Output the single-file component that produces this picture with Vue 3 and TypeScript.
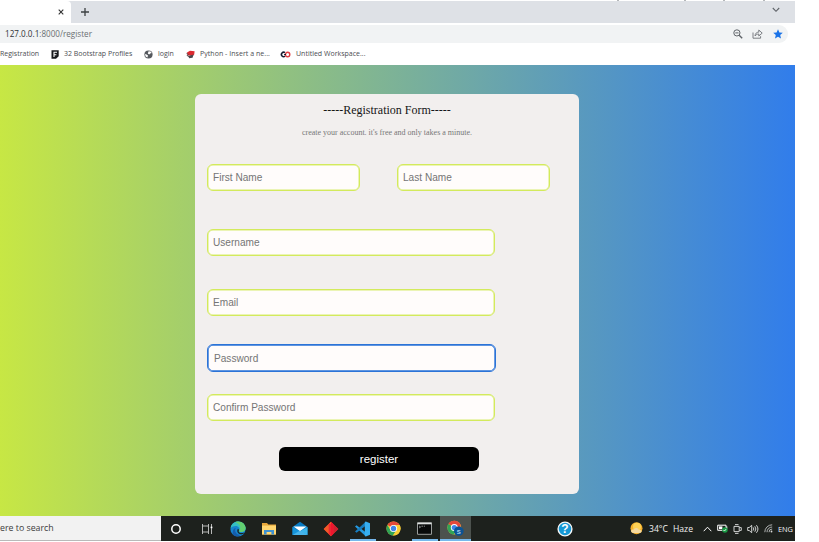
<script setup lang="ts">
import { ref } from 'vue'

interface Field {
  name: string
  label: string
  type: string
}

const nameFields: Field[] = [
  { name: 'first', label: 'First Name', type: 'text' },
  { name: 'last', label: 'Last Name', type: 'text' },
]
const accountFields: Field[] = [
  { name: 'username', label: 'Username', type: 'text' },
  { name: 'email', label: 'Email', type: 'text' },
  { name: 'password', label: 'Password', type: 'password' },
  { name: 'confirm', label: 'Confirm Password', type: 'password' },
]
const active = ref('password')
</script>

<template>
  <div class="screen">
    <header class="browser">
      <div class="edge"><i class="tick t1"></i><i class="tick t2"></i><i class="tick t3"></i><i class="tick t4"></i></div>
      <div class="tabs">
        <div class="tab">
          <svg width="6" height="6" viewBox="0 0 6 6"><path d="M.7.7 5.3 5.3M5.3.7.7 5.3" stroke="#333" stroke-width="1.1" /></svg>
        </div>
        <svg class="plus" width="8" height="8" viewBox="0 0 8 8"><path d="M4 0V8M0 4H8" stroke="#3c4043" stroke-width="1.3" /></svg>
        <svg class="chevron" width="8" height="6" viewBox="0 0 8 6"><path d="M.8 1 4 4.3 7.2 1" fill="none" stroke="#5f6368" stroke-width="1.1" /></svg>
      </div>
      <div class="address">
        <div class="url"><span class="host">127.0.0.1</span>:8000/register</div>
        <div class="actions">
          <svg width="10" height="10" viewBox="0 0 10 10" fill="none" stroke="#5f6368"><circle cx="3.9" cy="3.9" r="3.1" stroke-width="1" /><path d="M2.3 3.9H5.5" /><path d="M6.2 6.2 9.2 9.2" stroke-width="1.4" /></svg>
          <svg width="11" height="10" viewBox="0 0 11 10" fill="none" stroke="#6f7378" stroke-width=".9"><path d="M1 3.5V9.2H8.6V7.2" /><path d="M3 7C3.2 4.5 4.5 3.2 6.8 3.1V1L10.2 4.1 6.8 7V5C5 5 4 5.8 3 7Z" /></svg>
          <svg width="10" height="10" viewBox="0 0 10 10"><path d="M5 .3 6.4 3.5 9.8 3.8 7.2 6.1 8 9.5 5 7.7 2 9.5 2.8 6.1.2 3.8 3.6 3.5Z" fill="#1a73e8" /></svg>
        </div>
      </div>
      <nav class="bookmarks">
        <span class="bm b1">Registration</span>
        <svg class="i1" width="8" height="9" viewBox="0 0 8 9"><path d="M.5.3H7.7V6.2L5 8.8H.5Z" fill="#17191c" /><path d="M3 7V2.3H6M3 4.7H5.4" fill="none" stroke="#fff" stroke-width="1.1" /></svg>
        <span class="bm b2">32 Bootstrap Profiles</span>
        <svg class="i2" width="9" height="9" viewBox="0 0 9 9"><circle cx="4.5" cy="4.5" r="4.1" fill="#55595e" /><path d="M1 4 2.6 4.6 4 5.6 3.4 7.6 1.6 6.6ZM4.6 1.2 6.6 1.4 7.8 3 6.2 3.4 5.2 4.4 3.8 3.4Z" fill="#fff" /></svg>
        <span class="bm b3">login</span>
        <svg class="i3" width="9" height="9" viewBox="0 0 9 9"><path d="M1 2.6 4 .7 8.6 1.2 8.2 4.4 6.4 5.8 1.6 5.2Z" fill="#dc2a30" /><path d="M.6 3.4 2.4 4.6M.8 5.4 3 6.4 7.6 5" fill="none" stroke="#4a3a3e" stroke-width="1" /><path d="M2.2 6 7.2 5.4 6.6 7.8 3.2 8.3Z" fill="#4a474d" /></svg>
        <span class="bm b4">Python - Insert a ne...</span>
        <svg class="i4" width="11" height="7" viewBox="0 0 11 7" fill="none"><path d="M5 1.7A2.2 2.2 0 1 0 5 5.2" stroke="#171d31" stroke-width="1.6" /><circle cx="7.6" cy="3.5" r="2.2" stroke="#e13d43" stroke-width="1.4" /><path d="M4.1 3.5H6" stroke="#171d31" stroke-width="1.1" /></svg>
        <span class="bm b5">Untitled Workspace...</span>
      </nav>
    </header>

    <main class="page">
      <form class="card" @submit.prevent>
        <h1>-----Registration Form-----</h1>
        <p>create your account. it's free and only takes a minute.</p>
        <div class="names">
          <input v-for="f in nameFields" :key="f.name" :type="f.type" :placeholder="f.label" @focus="active = f.name" />
        </div>
        <input
          v-for="f in accountFields"
          :key="f.name"
          :class="['wide', f.name, { active: active === f.name }]"
          :type="f.type"
          :placeholder="f.label"
          @focus="active = f.name"
        />
        <button type="submit">register</button>
      </form>
    </main>

    <footer class="taskbar">
      <div class="search">ere to search</div>
      <div class="apps">
        <div class="app"><svg width="12" height="12" viewBox="0 0 12 12"><circle cx="6" cy="6" r="4.2" fill="none" stroke="#fff" stroke-width="1.5" /></svg></div>
        <div class="app"><svg width="12" height="12" viewBox="0 0 12 12" fill="none" stroke="#c8cac8"><path d="M1.5 1V3H7.5V1M1.5 11V9H7.5V11M1.5 3V9M7.5 3V9" stroke-width=".9" /><path d="M10.5 1V11" stroke-width=".9" /><path d="M10.5 3.6V5.2" stroke="#fff" stroke-width="1.8" /></svg></div>
        <div class="app"><svg width="16" height="16" viewBox="0 0 16 16"><circle cx="8" cy="8" r="7.6" fill="#1684cf" /><path d="M.6 7C1.2 2.8 4.4.4 8 .4 12.7.4 15.6 3.8 15.6 7.1 15.6 9.8 13.7 11.1 11.3 11.1 9.6 11.1 8.7 10.3 9.3 9.2 10 7.5 8.6 5 5.8 5 3.7 5 1.8 5.8.6 7Z" fill="#35bfc3" /><path d="M8 .4C12.7.4 15.6 3.8 15.6 7.1 15.6 9.8 13.7 11.1 11.3 11.1 9.6 11.1 8.7 10.3 9.3 9.2 11 6 11 3.5 5 .9Z" fill="#62cf70" /><path d="M5.8 7.1C4.1 9.9 6 14 10.6 14.1 8 16 5.2 15.8 3 13.7 2.1 10.2 3.3 7.8 5.8 7.1Z" fill="#155ca9" /><path d="M9.2 9.1C7.5 11.1 10.1 13.2 14.5 11.4 13.3 13 12 13.3 10.5 13.2 7.6 12.8 6.4 10 8 7.8Z" fill="#172923" /></svg></div>
        <div class="app"><svg width="16" height="14" viewBox="0 0 16 14"><path d="M1 1H6L7.3 2.4H15V12.5H1Z" fill="#e7a73b" /><path d="M1 3.6H15V12.5H1Z" fill="#ffd671" /><path d="M3 12.5V8H13V12.5H10.4V10.1H5.6V12.5Z" fill="#3e91d1" /></svg></div>
        <div class="app"><svg width="16" height="15" viewBox="0 0 16 15"><path d="M.5 6 8 .8 15.5 6V14H.5Z" fill="#087bc4" /><path d="M1.5 5.4H14.5L8 10.2Z" fill="#fff" /><path d="M.5 6 8 10.4 .5 14Z" fill="#1694da" /><path d="M15.5 6 8 10.4 15.5 14Z" fill="#3bb5ec" /><path d="M.5 14 8 9.6 15.5 14Z" fill="#48b4ea" /></svg></div>
        <div class="app"><svg width="16" height="16" viewBox="0 0 16 16"><path d="M8 .7 15.3 8 8 15.3.7 8Z" fill="#ef3324" /><path d="M8 .7V15.3L.7 8Z" fill="#f15a29" /><path d="M5.7 3H8V15.3L5.7 13Z" fill="#ee2731" /><path d="M8 .7 10.5 3.2V12.8L8 15.3Z" fill="#f0142e" /><path d="M10.5 3.2 15.3 8 10.5 12.8Z" fill="#cf2030" /></svg></div>
        <div class="app running"><svg width="17" height="16" viewBox="0 0 17 16"><path d="M1 5.4 2.5 4.2 12 11.4V15.4Z" fill="#259ae0" /><path d="M1 10.6 2.5 11.8 12 4.6V.6Z" fill="#167dc1" /><path d="M11.8.5 16 2.3V13.7L11.8 15.5 10.8 14.8V1.2Z" fill="#37aef0" /></svg></div>
        <div class="app"><svg width="15" height="15" viewBox="0 0 15 15"><circle cx="7.5" cy="7.5" r="7" fill="#f9cd35" /><path d="M7.5 7.5 1.4 4A7 7 0 0 1 13.6 4Z" fill="#e5493a" /><path d="M1.4 4A7 7 0 0 0 7 14.5L10.4 9.2 7.5 7.5 4.6 9.2Z" fill="#31a456" /><path d="M7.5 4H13.6A7 7 0 0 1 7 14.5L10.5 9.2Z" fill="#f9cd35" /><circle cx="7.5" cy="7.5" r="3.6" fill="#fff" /><circle cx="7.5" cy="7.5" r="2.7" fill="#4285e9" /></svg></div>
        <div class="app running"><svg width="15" height="13" viewBox="0 0 15 13"><path d="M.5.7H14.5V12.3H.5Z" fill="#080a0a" stroke="#9a9d9c" /><path d="M.5 1.5H14.5" stroke="#dce0df" stroke-width="1.6" /><path d="M2 4 3.6 5 2 6M4.4 4.2H6M6.8 4.2H8" fill="none" stroke="#b8bcba" stroke-width=".7" /></svg></div>
        <div class="app running current"><svg width="17" height="17" viewBox="0 0 17 17"><circle cx="7.3" cy="7.6" r="6.9" fill="#f9cd35" /><path d="M7.3 7.6 1.3 4.1A6.9 6.9 0 0 1 13.5 4.6V7.6Z" fill="#e5493a" /><path d="M1.3 4.1A6.9 6.9 0 0 0 6.8 14.5L10 9 7.3 7.6Z" fill="#31a456" /><circle cx="7.3" cy="7.6" r="3.5" fill="#fff" /><circle cx="7.3" cy="7.6" r="2.6" fill="#4285e9" /><circle cx="11.8" cy="11.2" r="4.8" fill="#0c5394" /><text class="badge" x="11.8" y="13.5" text-anchor="middle">S</text></svg></div>
      </div>
      <svg class="help" width="16" height="16" viewBox="0 0 16 16"><circle cx="8" cy="8" r="6.9" fill="#1698d5" stroke="#f5f7f7" stroke-width="1.4" /><text class="question" x="8" y="12.2" text-anchor="middle">?</text></svg>
      <svg class="sun" width="13" height="13" viewBox="0 0 13 13"><circle cx="6.5" cy="6.3" r="6" fill="#f6b12c" /><circle cx="7" cy="4.8" r="4" fill="#ffd255" /><path d="M1.8 10.5C.2 9 1.5 7.1 3.6 7.6 5.2 5.3 8 5.7 8.7 7.8 12.2 7.1 12.7 10.7 9.5 11H3Z" fill="#f5d99e" /></svg>
      <span class="temp">34°C</span>
      <span class="haze">Haze</span>
      <div class="tray">
        <svg width="9" height="6" viewBox="0 0 9 6"><path d="M.7 5.2 4.5 1.2 8.3 5.2" fill="none" stroke="#fff" /></svg>
        <svg width="11" height="9" viewBox="0 0 11 9"><path d="M.7 1.2H9V6.3H.7Z" fill="#1d211d" stroke="#fff" /><path d="M2 2.4H5.4V5.1H2Z" fill="#fff" /><path d="M9.8 2.4V4.7" stroke="#fff" /><circle cx="7.9" cy="6" r="2.8" fill="#189943" /><path d="M6.5 6 7.5 7 9.3 4.9" fill="none" stroke="#fff" stroke-width=".8" /></svg>
        <svg width="9" height="10" viewBox="0 0 9 10" fill="none" stroke="#e2e3e3" stroke-width=".9"><path d="M2 .6H5.5M2 9.4H5.5M1 2.4H6.2V7.6H1ZM6.4 3.6H8.3V6.4H6.4" /></svg>
        <svg width="12" height="10" viewBox="0 0 12 10" fill="none" stroke="#e2e3e3" stroke-width=".9"><path d="M.7 3.5H2.2L4.7 1.3V8.7L2.2 6.5H.7ZM6.2 3.4Q7.5 5 6.2 6.6M7.8 2.3Q10 5 7.8 7.7M9.4 1.2Q12.5 5 9.4 8.8" /></svg>
        <svg width="9" height="9" viewBox="0 0 9 9" fill="none" stroke="#bfc2c2" stroke-width=".9"><path d="M.8 8.2A7.4 7.4 0 0 1 8.2.8M3 8.2A5.2 5.2 0 0 1 8.2 3M5 8.2A3.2 3.2 0 0 1 8.2 5" /><circle cx="7.5" cy="7.5" r=".9" fill="#ddd" stroke="none" /></svg>
        <span>ENG</span>
      </div>
    </footer>
  </div>
</template>

<style>
body { background: #fff; overflow: hidden; }
</style>

<style scoped>
* { box-sizing: border-box; }
svg { display: block; flex: none; }
.screen { width: 795px; height: 541px; display: flex; flex-direction: column; overflow: hidden; font-family: "Open Sans", "Noto Sans", sans-serif; white-space: nowrap; }
.browser { height: 65px; flex: none; background: #fff; }
.edge { height: 1px; display: flex; background: #fff; }
.tick { width: 2px; height: 1px; background: #b5b8bb; }
.t1 { margin-left: 617px; } .t2 { margin-left: 65px; } .t3 { margin-left: 37px; } .t4 { margin-left: 38px; }
.tabs { height: 22px; display: flex; align-items: center; background: #dee1e6; }
.tab { width: 71px; height: 22px; padding: 0 7px 0 0; background: #fff; border-top-right-radius: 4px; display: flex; justify-content: flex-end; align-items: center; }
.plus { margin-left: 10px; }
.chevron { margin-left: auto; margin-right: 15px; margin-bottom: 4px; }
.address { width: 788px; height: 18px; margin-top: 2px; padding: 0 6px 0 5px; display: flex; align-items: center; background: #f1f3f4; border-radius: 0 9px 9px 0; }
.url { font-size: 8.15px; line-height: 18px; color: #6b6f73; }
.host { color: #303236; }
.actions { display: flex; align-items: center; gap: 10px; margin-left: auto; margin-right: -1px; }
.actions svg:first-child { margin-right: -1px; }
.bookmarks { height: 22px; display: flex; align-items: center; font-size: 7px; color: #4b4e52; }
.bm { flex: none; line-height: 22px; }
.b1 { width: 51px; } .b2 { width: 80px; margin-left: 5px; } .b3 { width: 28px; margin-left: 5px; } .b4 { width: 80px; margin-left: 5px; letter-spacing: .04px; } .b5 { margin-left: 5px; }
.page { height: 451px; flex: none; padding: 29px 0 0 195px; background: linear-gradient(90deg, #c7e744, #317deb); }
.card { width: 384px; height: 400px; padding: 0 12px; background: #f2efee; border-radius: 6px; display: flex; flex-direction: column; align-items: flex-start; }
h1 { align-self: center; margin: 8px 0 0; font: 400 12px/16px "Liberation Serif", serif; color: #151515; }
p { align-self: center; margin: 9px 0 0; font: 8px/12px "Liberation Serif", serif; color: #777; }
.names { display: flex; gap: 37px; margin-top: 25px; }
input { width: 153px; height: 27px; padding: 0 5px; border: 1px solid #d3ea5c; border-radius: 6px; background: #fffcfb; box-shadow: inset 0 0 0 .5px #d8ec70; font: 10.1px "Liberation Sans", sans-serif; color: #333; outline: 0; }
input::placeholder { color: #757575; opacity: 1; }
.wide { width: 288px; flex: none; }
.username { margin-top: 38px; } .email { margin-top: 33px; } .password { margin-top: 28px; } .confirm { margin-top: 22px; }
.active { width: 289px; height: 28px; border-color: #2b73d7; box-shadow: inset 0 0 0 .7px #2b73d7; padding-left: 6px; }
button { width: 200px; height: 24px; margin: 26px 0 0 72px; padding: 0; border: 0; border-radius: 6px; background: #000; color: #fff; font: 11.5px "Liberation Sans", sans-serif; }
.taskbar { height: 25px; flex: none; display: flex; align-items: center; background: #1d211d; color: #f1f1f1; }
.search { width: 161px; height: 25px; background: #f2f2f2; border-bottom: 1px solid #b9b9b9; color: #3c3c3c; font-size: 8.8px; line-height: 25px; }
.apps { display: flex; height: 25px; width: 310px; }
.app { width: 31px; height: 25px; display: flex; align-items: center; justify-content: center; padding-right: 1px; }
.running { background: linear-gradient(#76b9ed, #76b9ed) 50% 100% / 26px 2px no-repeat; }
.current { background-color: #4c524e; background-size: 31px 2px; }
.badge { font: 700 6px "Liberation Sans", sans-serif; fill: #b5d8ef; }
.question { font: 700 12px "Liberation Sans", sans-serif; fill: #fff; }
.help { margin-left: 86px; }
.sun { margin-left: 57px; }
.temp { margin-left: 6px; width: 24px; font-size: 8.6px; }
.haze { font-size: 8.6px; }
.tray { margin-left: auto; display: flex; align-items: center; gap: 5px; padding-right: 2px; font-size: 7.4px; }
</style>
